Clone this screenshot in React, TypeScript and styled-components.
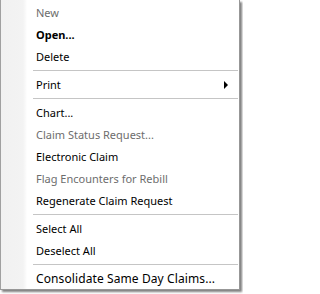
import styled, { createGlobalStyle } from 'styled-components';

const GlobalStyle = createGlobalStyle`
    html, body {
        margin: 0;
        padding: 0;
        background: #ffffff;
        width: 243px;
        height: 294px;
        overflow: hidden;
    }
`;

const Menu = styled.div`
    position: relative;
    width: 240px;
    height: 290px;
    box-sizing: border-box;
    padding-top: 2px;
    border-left: 1px solid #a0a0a0;
    border-right: 1px solid #979797;
    border-bottom: 1px solid #979797;
    background: linear-gradient(to right, #f1f1f1 0, #f3f3f3 22px, #fbfbfb 25px, #ffffff 26px);
    box-shadow: 2px 2px 2px rgba(0, 0, 0, 0.5);
    font-family: "Noto Sans", "Open Sans", sans-serif;
    font-size: 11px;
    display: flex;
    flex-direction: column;
`;

const Item = styled.div<{ $disabled?: boolean; $bold?: boolean; $wide?: boolean }>`
    height: 22px;
    display: flex;
    align-items: center;
    justify-content: space-between;
    padding-left: 35px;
    padding-right: 11px;
    color: ${p => (p.$disabled ? '#6d6d6d' : '#000000')};
    font-weight: ${p => (p.$bold ? 700 : 400)};
    font-size: ${p => (p.$wide ? '12px' : '11px')};
    letter-spacing: ${p => (p.$wide ? '0.1px' : 'normal')};
    white-space: nowrap;
`;

const Separator = styled.div`
    height: 6px;
    display: flex;
    align-items: center;
    padding-left: 32px;
    padding-right: 1px;

    &::after {
        content: "";
        flex: 1;
        height: 1px;
        background: #c5c5c5;
    }
`;

const Arrow = styled.span`
    width: 0;
    height: 0;
    border-top: 4px solid transparent;
    border-bottom: 4px solid transparent;
    border-left: 4px solid #000000;
`;

type Entry = { label: string; disabled?: boolean; bold?: boolean; sub?: boolean; wide?: boolean } | 'sep';

const entries: Entry[] = [
    { label: 'New', disabled: true },
    { label: 'Open...', bold: true },
    { label: 'Delete' },
    'sep',
    { label: 'Print', sub: true },
    'sep',
    { label: 'Chart...' },
    { label: 'Claim Status Request...', disabled: true },
    { label: 'Electronic Claim' },
    { label: 'Flag Encounters for Rebill', disabled: true },
    { label: 'Regenerate Claim Request' },
    'sep',
    { label: 'Select All' },
    { label: 'Deselect All' },
    'sep',
    { label: 'Consolidate Same Day Claims...', wide: true },
];

export default function App() {
    return (
        <>
            <GlobalStyle />
            <Menu>
                {entries.map((e, i) =>
                    e === 'sep' ? (
                        <Separator key={i} />
                    ) : (
                        <Item key={i} $disabled={e.disabled} $bold={e.bold} $wide={e.wide}>
                            <span>{e.label}</span>
                            {e.sub ? <Arrow /> : null}
                        </Item>
                    )
                )}
            </Menu>
        </>
    );
}
